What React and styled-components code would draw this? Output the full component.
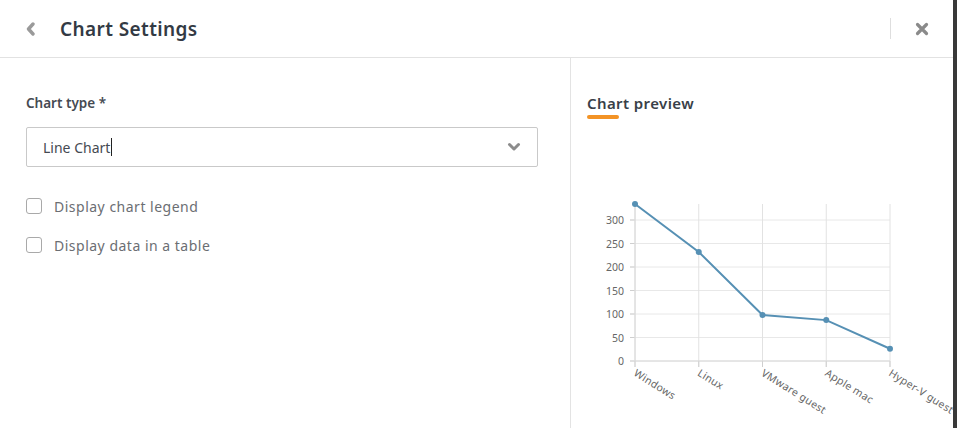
import React from "react";
import styled, { createGlobalStyle } from "styled-components";

const Global = createGlobalStyle`
  html, body { margin: 0; padding: 0; background: #fff; }
  body { font-family: "Noto Sans", "Open Sans", sans-serif; }
  * { box-sizing: border-box; }
`;

const Page = styled.div`
  width: 957px;
  height: 428px;
  display: flex;
  flex-direction: column;
  border-right: 4px solid #393939;
  background: #fff;
  overflow: hidden;
`;

const Header = styled.header`
  height: 58px;
  flex: none;
  display: flex;
  align-items: center;
  padding: 0 24px 0 24px;
  border-bottom: 1px solid #e2e2e2;
`;

const IconButton = styled.button`
  border: none;
  background: none;
  padding: 0;
  display: flex;
  align-items: center;
  justify-content: center;
  width: ${(p) => p.$w}px;
  height: 20px;
  cursor: pointer;
`;

const Title = styled.h1`
  margin: 0 0 0 22px;
  font-size: 19px;
  font-weight: 600;
  color: #333a44;
  flex: 1;
  letter-spacing: 0.4px;
`;

const Separator = styled.div`
  width: 1px;
  height: 21px;
  background: #dedede;
  margin-right: 24px;
`;

const Body = styled.div`
  flex: 1;
  display: flex;
  min-height: 0;
`;

const LeftPanel = styled.section`
  width: 571px;
  flex: none;
  border-right: 1px solid #e3e3e3;
  padding: 35px 32px 0 26px;
  display: flex;
  flex-direction: column;
`;

const Label = styled.label`
  font-size: 13.5px;
  line-height: 20px;
  font-weight: 600;
  color: #454a52;
`;

const Select = styled.div`
  margin-top: 14px;
  height: 40px;
  border: 1px solid #c9c9c9;
  border-radius: 2px;
  display: flex;
  align-items: center;
  padding: 0 16px 0 16px;
  font-size: 14px;
  color: #454a52;
`;

const SelectValue = styled.span`
  flex: 1;
  display: flex;
  align-items: center;
`;

const Caret = styled.span`
  display: inline-block;
  width: 1px;
  height: 18px;
  background: #222;
  margin-left: 1px;
`;

const Options = styled.div`
  margin-top: 29px;
  display: flex;
  flex-direction: column;
  gap: 19px;
`;

const CheckRow = styled.label`
  display: flex;
  align-items: center;
  height: 20px;
  gap: 12px;
  font-size: 14px;
  letter-spacing: 0.5px;
  color: #6b6e73;
`;

const Box = styled.span`
  width: 16px;
  height: 16px;
  border: 1px solid #a9a9a9;
  border-radius: 3px;
  background: #fff;
`;

const RightPanel = styled.section`
  flex: 1;
  min-width: 0;
  padding: 35px 0 0 16px;
  display: flex;
  flex-direction: column;
  overflow: hidden;
`;

const PreviewTitle = styled.h2`
  margin: 0;
  font-size: 15px;
  line-height: 20px;
  font-weight: 600;
  letter-spacing: 0.4px;
  color: #393f48;
`;

const Underline = styled.div`
  margin-top: 2px;
  width: 32px;
  height: 4px;
  border-radius: 2px;
  background: #f39325;
`;

const ChartWrap = styled.div`
  margin-top: 62px;
  width: 366px;
  height: 248px;
  overflow: hidden;
`;

const data = [
  { label: "Windows", v: 334 },
  { label: "Linux", v: 232 },
  { label: "VMware guest", v: 98 },
  { label: "Apple mac", v: 87 },
  { label: "Hyper-V guest", v: 26 },
];

function LineChart() {
  const x0 = 48;
  const step = 63.75;
  const y0 = 180;
  const scale = 0.47;
  const top = 23;
  const xEnd = x0 + step * 4;
  const ys = [0, 50, 100, 150, 200, 250, 300];
  const pts = data.map((d, i) => [x0 + i * step, y0 - d.v * scale]);
  return (
    <svg width="366" height="248" viewBox="0 0 366 248">
      {ys.map((v) => {
        const y = y0 - v * scale;
        return (
          <g key={v}>
            <line x1={x0 - 5} x2={xEnd} y1={y} y2={y} stroke="#e8e8e8" strokeWidth="1" />
            <line x1={x0 - 5} x2={x0} y1={y} y2={y} stroke="#cfcfcf" strokeWidth="1" />
            <text x={x0 - 11} y={y + 4} textAnchor="end" fontSize="10.5" fill="#666" fontFamily="Noto Sans, sans-serif">
              {v}
            </text>
          </g>
        );
      })}
      {data.map((d, i) => {
        const x = x0 + i * step;
        return (
          <g key={d.label}>
            <line x1={x} x2={x} y1={top} y2={y0 + 6} stroke="#e2e2e2" strokeWidth="1" />
            <line x1={x} x2={x} y1={y0} y2={y0 + 6} stroke="#cfcfcf" strokeWidth="1" />
            <text
              x={x - 2}
              y={y0 + 14}
              fontSize="10.5"
              fill="#666"
              letterSpacing="0.3"
              fontFamily="Noto Sans, sans-serif"
              transform={`rotate(32 ${x - 2} ${y0 + 14})`}
            >
              {d.label}
            </text>
          </g>
        );
      })}
      <line x1={x0} x2={x0} y1={top} y2={y0} stroke="#d8d8d8" strokeWidth="1" />
      <line x1={x0} x2={xEnd} y1={y0} y2={y0} stroke="#d8d8d8" strokeWidth="1" />
      <polyline
        points={pts.map((p) => p.join(",")).join(" ")}
        fill="none"
        stroke="#5690b4"
        strokeWidth="2"
      />
      {pts.map((p, i) => (
        <circle key={i} cx={p[0]} cy={p[1]} r="3" fill="#5690b4" />
      ))}
    </svg>
  );
}

export default function App() {
  return (
    <>
      <Global />
      <Page>
        <Header>
          <IconButton $w={14} aria-label="Back">
            <svg width="12" height="14" viewBox="0 0 12 14">
              <polyline points="8,2 3.5,7 8,12" fill="none" stroke="#9a9a9a" strokeWidth="3.4" strokeLinejoin="round" strokeLinecap="round" />
            </svg>
          </IconButton>
          <Title>Chart Settings</Title>
          <Separator />
          <IconButton $w={14} aria-label="Close">
            <svg width="14" height="14" viewBox="0 0 14 14">
              <path d="M2.5 2.5 L11.5 11.5 M11.5 2.5 L2.5 11.5" stroke="#8a8a8a" strokeWidth="3.2" strokeLinecap="round" />
            </svg>
          </IconButton>
        </Header>
        <Body>
          <LeftPanel>
            <Label>Chart type *</Label>
            <Select>
              <SelectValue>
                Line Chart
                <Caret />
              </SelectValue>
              <svg width="14" height="10" viewBox="0 0 14 10">
                <polyline points="2.5,2.5 7,7 11.5,2.5" fill="none" stroke="#8c8c8c" strokeWidth="3" strokeLinejoin="round" strokeLinecap="round" />
              </svg>
            </Select>
            <Options>
              <CheckRow>
                <Box />
                Display chart legend
              </CheckRow>
              <CheckRow>
                <Box />
                Display data in a table
              </CheckRow>
            </Options>
          </LeftPanel>
          <RightPanel>
            <PreviewTitle>Chart preview</PreviewTitle>
            <Underline />
            <ChartWrap>
              <LineChart />
            </ChartWrap>
          </RightPanel>
        </Body>
      </Page>
    </>
  );
}
